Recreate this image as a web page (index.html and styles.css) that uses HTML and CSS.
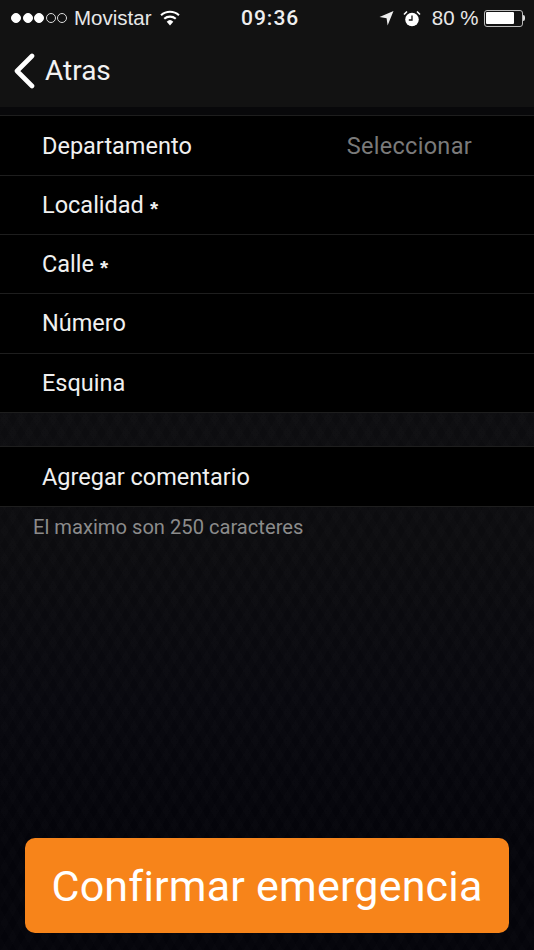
FILE: index.html
```html
<!DOCTYPE html>
<html lang="es">
<head>
<meta charset="utf-8">
<title>Confirmar emergencia</title>
<link rel="stylesheet" href="styles.css">
</head>
<body>
<div class="app">
  <header class="top">
    <div class="status">
      <div class="status-side">
        <span class="dots"><i class="on"></i><i class="on"></i><i class="on"></i><i></i><i></i></span>
        <span class="carrier">Movistar</span>
        <svg class="wifi" width="22" height="16" viewBox="0 0 20 15"><path d="M10 14.5 6.9 10.9a4.6 4.6 0 0 1 6.2 0z" fill="#fff"/><path d="M4.6 8.2a8.2 8.2 0 0 1 10.8 0M1.6 4.9a12.6 12.6 0 0 1 16.8 0" fill="none" stroke="#fff" stroke-width="2"/></svg>
      </div>
      <span class="time">09:36</span>
      <div class="status-side right">
        <svg width="15" height="16" viewBox="0 0 15 16"><path d="M14.5 1 8.6 15.5 7.6 8.2 .5 7z" fill="#eee"/></svg>
        <svg class="alarm" width="18" height="17" viewBox="0 0 18 17"><circle cx="9" cy="9.5" r="6.8" fill="#fff"/><path d="M9 5.5V10H5.8" fill="none" stroke="#121212" stroke-width="1.3"/><path d="M1 4.5 4 1.5M17 4.5 14 1.5" stroke="#fff" stroke-width="1.6"/></svg>
        <span class="pct">80 %</span>
        <span class="battery"><span class="battery-fill"></span></span><span class="battery-tip"></span>
      </div>
    </div>
    <nav class="nav">
      <svg width="24" height="36" viewBox="0 0 24 36"><path d="M20 3 5 18l15 15" fill="none" stroke="#fff" stroke-width="4.6" stroke-linecap="round" stroke-linejoin="round"/></svg>
      <span class="back">Atras</span>
    </nav>
  </header>

  <main class="content">
    <div class="gap-top"></div>
    <section class="group">
      <div class="row"><span>Departamento</span><span class="value">Seleccionar</span></div>
      <div class="row"><span>Localidad<span class="star">*</span></span></div>
      <div class="row"><span>Calle<span class="star">*</span></span></div>
      <div class="row"><span>Número</span></div>
      <div class="row"><span>Esquina</span></div>
    </section>
    <div class="gap-mid"></div>
    <section class="group">
      <div class="row"><span>Agregar comentario</span></div>
    </section>
    <p class="hint">El maximo son 250 caracteres</p>
  </main>

  <div class="footer"><button class="confirm" type="button">Confirmar emergencia</button></div>
</div>
</body>
</html>
```
FILE: styles.css
```css
* { box-sizing: border-box; }
html, body { margin: 0; padding: 0; background: #000; }
.app {
  width: 534px; height: 950px; overflow: hidden;
  display: flex; flex-direction: column;
  font-family: Roboto, "Liberation Sans", sans-serif;
  color: #f2f2f2;
  background-color: #08080e;
  background-image:
    repeating-linear-gradient(60deg, rgba(255,255,255,.007) 0 7px, transparent 7px 14px),
    repeating-linear-gradient(120deg, rgba(255,255,255,.007) 0 7px, transparent 7px 14px),
    linear-gradient(#101012 0, #0c0c0f 540px, #08080e 700px, #04040a 840px);
}
.top { height: 107px; background: #121212; flex: none; }
.status {
  height: 36px; padding: 0 11px; position: relative;
  display: flex; align-items: center; justify-content: space-between;
  font-family: "Liberation Sans", Arial, sans-serif; font-size: 19.5px; color: #e8e8e8;
}
.status-side { display: flex; align-items: center; }
.dots { display: flex; gap: 1.5px; margin-right: 7px; }
.dots i { width: 10px; height: 10px; border-radius: 50%; border: 1px solid #ddd; display: block; }
.dots i.on { background: #fff; border-color: #fff; }
.carrier { font-size: 20.5px; }
.wifi { margin-left: 8px; }
.time { position: absolute; left: 241px; font-family: Roboto, sans-serif; font-weight: 500; font-size: 21px; color: #eee; letter-spacing: 1px; }
.alarm { margin-left: 9px; }
.pct { margin-left: 11px; margin-right: 5px; font-size: 20.5px; }
.battery { width: 39px; height: 17px; border: 1px solid #bbb; border-radius: 3px; padding: 1.5px; display: block; }
.battery-fill { display: block; width: 28px; height: 100%; background: #fff; border-radius: 1px; }
.battery-tip { width: 2.5px; height: 6px; background: #ddd; border-radius: 0 2px 2px 0; margin-right: -2px; }
.nav { height: 71px; padding: 0 0 2px 12px; display: flex; align-items: center; gap: 9px; }
.back { font-size: 28px; color: #f2f2f2; }
.content { flex: 1; }
.gap-top { height: 8px; background: #08080a; }
.gap-mid { height: 33.5px; }
.group { background: #000; border-top: 1px solid #1e1e1e; padding-top: .5px; }
.row {
  height: 59.25px; padding: 0 62px 0 42px; border-bottom: 1px solid #1e1e1e;
  display: flex; align-items: center; justify-content: space-between;
  font-size: 23.5px; color: #f0f0f0;
}
.value { color: #7a7a7a; letter-spacing: .3px; }
.star { font-family: "Liberation Sans", sans-serif; font-size: 21px; font-weight: 700; margin-left: 6px; vertical-align: -3px; line-height: 1; }
.hint { margin: 8.5px 0 0 33px; font-size: 20.15px; color: #8b8b8b; line-height: 22px; }
.footer { padding: 0 25px 17px; flex: none; }
.confirm {
  width: 100%; height: 95px; border: 0; border-radius: 10px;
  background: #f7841a; color: #fff;
  font-family: Roboto, "Liberation Sans", sans-serif; font-size: 43px; padding: 0; letter-spacing: .2px;
}
```
